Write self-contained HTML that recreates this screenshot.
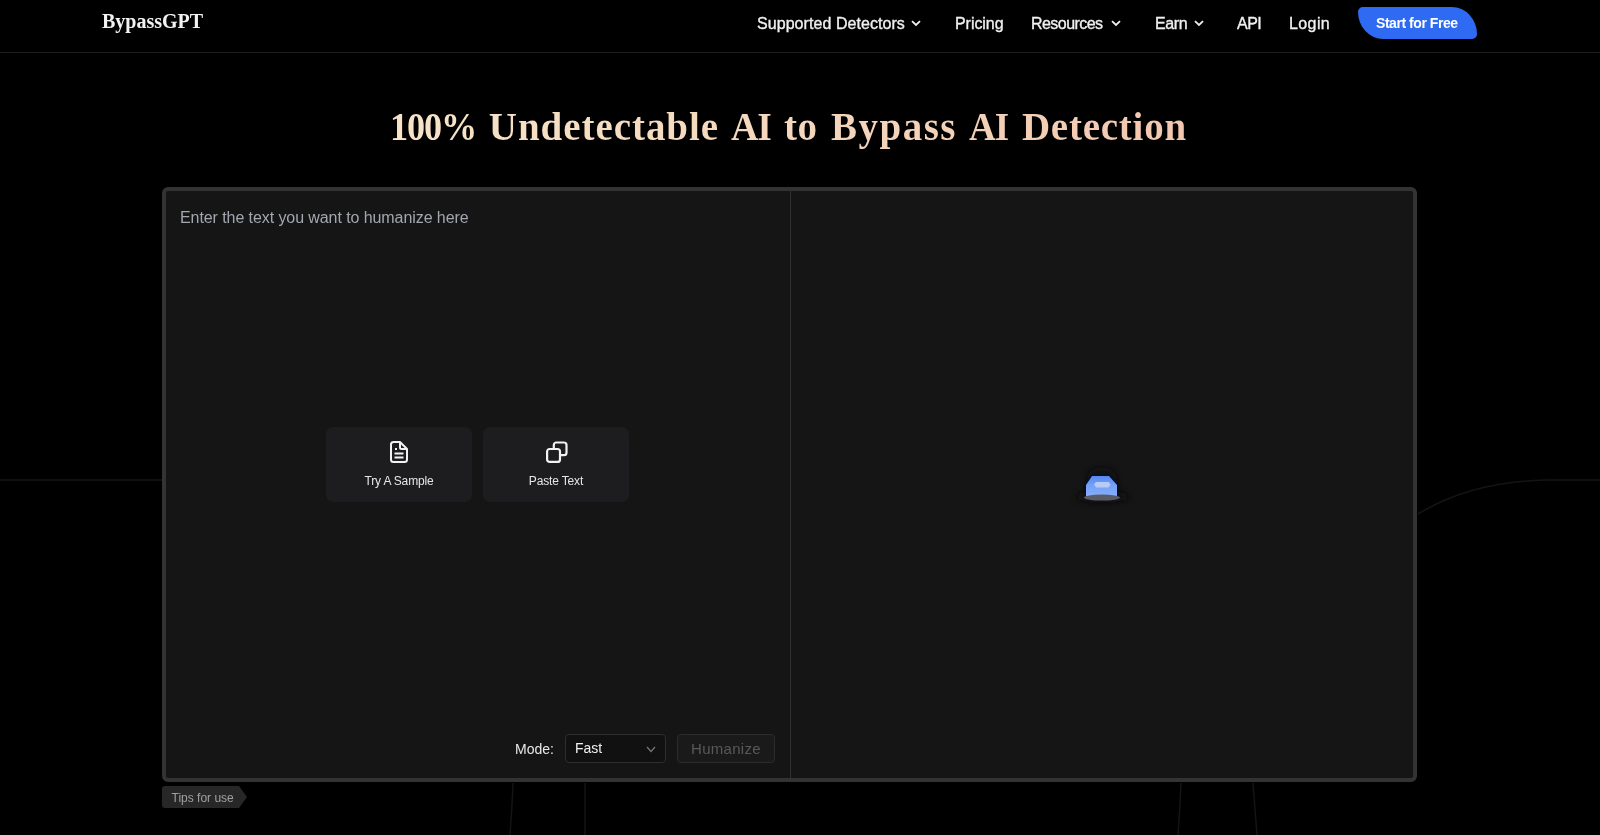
<!DOCTYPE html>
<html><head><meta charset="utf-8">
<style>
*{margin:0;padding:0;box-sizing:border-box}
html,body{width:1600px;height:835px;overflow:hidden;background:#000}
body{position:relative;font-family:"Liberation Sans",sans-serif;color:#fff;-webkit-font-smoothing:antialiased}
#hdr,#box,.tips{will-change:transform}
.abs{position:absolute;white-space:nowrap}
#hdr{position:absolute;left:0;top:0;width:1600px;height:53px;border-bottom:1px solid #1c1c1c;background:#000}
.logo{left:102px;top:9px;font-family:"Liberation Serif",serif;font-weight:700;font-size:20px;line-height:24px;color:#f2f2f2}
.nav{top:14.8px;font-size:16px;line-height:18px;color:#f0f0f0;-webkit-text-stroke:0.35px #f0f0f0}
.chev{position:absolute;top:0}
.cta{position:absolute;left:1358px;top:7px;width:119px;height:32px;background:#2f6bf2;border-radius:5px 26px 5px 26px / 5px 28px 5px 28px;}
.cta span{position:absolute;left:18px;top:8px;font-size:14px;line-height:16px;font-weight:700;color:#fff;letter-spacing:-0.45px}
.title{position:absolute;left:0;top:106px;width:1600px;height:46px;font-family:"Liberation Serif",serif;font-weight:700;font-size:39px;line-height:42px}
.title span{position:absolute;top:0;white-space:nowrap;height:46px;background-image:linear-gradient(90deg,#f7e4c8 0px,#f7e4c8 400px,#f4d4ba 880px,#f3c8b0 1180px,#f3c8b0 1600px);background-size:1600px 46px;-webkit-background-clip:text;background-clip:text;color:transparent}
#box{position:absolute;left:162px;top:187px;width:1255px;height:595px;border:4px solid #333;border-radius:6px;background:#151515}
#div{position:absolute;left:624px;top:0;width:1px;height:587px;background:#303030}
.ph{left:14px;top:18px;font-size:16px;line-height:18px;color:#a2a7af;letter-spacing:-0.08px}
.card{position:absolute;top:236px;width:146px;height:75px;background:#1d1d1f;border-radius:7px}
.card span{position:absolute;left:0;width:100%;text-align:center;top:47px;letter-spacing:-0.15px;font-size:12px;line-height:14px;color:#e6e6e6}
.card svg{position:absolute;top:14px}
.tips{position:absolute;left:162px;top:786px;width:86px;height:22px}
.tips span{position:absolute;left:9.5px;top:5px;font-size:12px;line-height:14px;color:#a0a0a0;white-space:nowrap}
.mode{left:349px;top:550px;font-size:14px;line-height:16px;color:#e8e8e8}
.sel{position:absolute;left:399px;top:543px;width:101px;height:29px;border:1px solid #2e2e2e;border-radius:4px;background:#111}
.sel span{position:absolute;left:9px;top:5px;font-size:14px;line-height:16px;color:#f0f0f0}
.hum{position:absolute;left:511px;top:543px;width:98px;height:29px;border:1px solid #2c2c2c;border-radius:4px;background:#1a1a1a}
.hum span{position:absolute;left:13px;top:5px;font-size:15px;line-height:17px;color:#595959;letter-spacing:0.3px}
</style></head><body>
<svg class="abs" style="left:0;top:0" width="1600" height="835">
  <g fill="none" stroke="#141414" stroke-width="1.5">
    <line x1="0" y1="480" x2="165" y2="480"/>
    <path d="M1418 514 Q1470 482 1545 480 L1600 480"/>
    <path d="M513 783 Q512 810 510 835"/>
    <path d="M585 783 L585 835"/>
    <path d="M1181 783 Q1180 810 1178 835"/>
    <path d="M1253 783 Q1255 810 1257 835"/>
  </g>
</svg>
<div id="hdr">
  <div class="abs logo">BypassGPT</div>
  <div class="abs nav" style="left:757px;letter-spacing:0.06px">Supported Detectors</div>
  <svg class="abs" style="left:911px;top:20px" width="11" height="8" viewBox="0 0 11 8"><path d="M1 1.2 L5 5 L9 1.2" fill="none" stroke="#f0f0f0" stroke-width="1.8"/></svg>
  <div class="abs nav" style="left:955px;letter-spacing:-0.05px">Pricing</div>
  <div class="abs nav" style="left:1031px;letter-spacing:-0.55px">Resources</div>
  <svg class="abs" style="left:1111px;top:20px" width="11" height="8" viewBox="0 0 11 8"><path d="M1 1.2 L5 5 L9 1.2" fill="none" stroke="#f0f0f0" stroke-width="1.8"/></svg>
  <div class="abs nav" style="left:1155px;letter-spacing:-0.4px">Earn</div>
  <svg class="abs" style="left:1194px;top:20px" width="11" height="8" viewBox="0 0 11 8"><path d="M1 1.2 L5 5 L9 1.2" fill="none" stroke="#f0f0f0" stroke-width="1.8"/></svg>
  <div class="abs nav" style="left:1237px;letter-spacing:-0.5px">API</div>
  <div class="abs nav" style="left:1289px;letter-spacing:0.4px">Login</div>
  <div class="cta"><span>Start for Free</span></div>
</div>
<div class="title"><span style="left:390px;background-position:-390px 0;letter-spacing:-1.2px;transform:scaleX(0.93);transform-origin:0 0">100%</span><span style="left:488.8px;background-position:-488.8px 0;letter-spacing:0.955px">Undetectable</span><span style="left:731px;background-position:-731px 0;letter-spacing:-1px;transform:scaleX(0.97);transform-origin:0 0">AI</span><span style="left:783.9px;background-position:-783.9px 0;letter-spacing:0.5px">to</span><span style="left:831.1px;background-position:-831.1px 0;letter-spacing:1.46px">Bypass</span><span style="left:969px;background-position:-969px 0;letter-spacing:-1px;transform:scaleX(0.95);transform-origin:0 0">AI</span><span style="left:1021.9px;background-position:-1021.9px 0;letter-spacing:0.763px">Detection</span></div>
<div id="box">
  <div id="div"></div>
  <div class="abs ph">Enter the text you want to humanize here</div>
  <div class="card" style="left:160px">
    <svg style="left:64px;top:14px" width="18" height="22" viewBox="0 0 18 22"><g fill="none" stroke="#f2f2f2" stroke-width="2" stroke-linejoin="round"><path d="M1 3.5Q1 1 3.5 1L10 1L17 8L17 18.5Q17 21 14.5 21L3.5 21Q1 21 1 18.5Z"/><path d="M10 1L10 6.5Q10 8 11.5 8L17 8"/><path d="M4.5 12.4H13.5M4.5 16.6H13.5"/></g><rect x="5" y="7" width="2" height="2" fill="#f2f2f2"/></svg>
    <span>Try A Sample</span>
  </div>
  <div class="card" style="left:317px">
    <svg style="left:62px;top:14px" width="24" height="23" viewBox="0 0 24 23"><g stroke="#f2f2f2" stroke-width="2.2"><rect x="8.8" y="1.5" width="12.7" height="12.7" rx="2.5" fill="none"/><rect x="2.1" y="8" width="12.9" height="12.9" rx="2.5" fill="#1d1d1f"/></g></svg>
    <span>Paste Text</span>
  </div>
  <div class="abs mode">Mode:</div>
  <div class="sel"><span>Fast</span><svg width="10" height="7" viewBox="0 0 10 7" style="position:absolute;left:80px;top:11px"><path d="M1 1L5 5.5L9 1" fill="none" stroke="#777" stroke-width="1.2"/></svg></div>
  <div class="hum"><span>Humanize</span></div>
  <svg style="position:absolute;left:900px;top:265px" width="80" height="60" viewBox="0 0 80 60">
    <defs><radialGradient id="sh" cx="50%" cy="50%" r="50%"><stop offset="0%" stop-color="#2a2a2a"/><stop offset="100%" stop-color="#161616" stop-opacity="0"/></radialGradient></defs>
    <defs><filter id="bf" x="-50%" y="-50%" width="200%" height="200%"><feGaussianBlur stdDeviation="3"/></filter></defs><path d="M10 43 Q12 36 20 36 L22 20 Q24 12 36 12 Q48 12 50 20 L52 36 Q61 36 63 43 Q36 50 10 43Z" fill="#0c0c0c" filter="url(#bf)" opacity="0.8"/>
    
    <path d="M26 29.5L27.5 25.6 C 30.5 20.5 30.5 19.5 33 19.9 L42.5 19.9 C 44.5 19.5 45 20.5 47.5 25.6 L51.4 29.5 L51.4 41 L20 41 L20 29.5 Z" fill="none"/>
    <path d="M20 40 L20 29 L26 20 L43 20 L51 29 L51 40" fill="none" stroke="#000c2e" stroke-width="2.4" stroke-linejoin="round"/>
    <path d="M20 29 L26 20 L43 20 L51 29 L51 40.5 L20 40.5 Z" fill="url(#bl)"/>
    <defs><linearGradient id="bl" x1="0" y1="0" x2="0" y2="1"><stop offset="0%" stop-color="#5687f0"/><stop offset="45%" stop-color="#74a0f8"/><stop offset="100%" stop-color="#88aefb"/></linearGradient></defs>
    <ellipse cx="36" cy="41.6" rx="18" ry="3" fill="#575c68"/><path d="M28 28.5 L30 26 L42.5 26 L44.5 28.5 L42.5 31.5 L30 31.5 Z" fill="#b6cbf8"/>
  </svg>
</div>
<div class="tips"><svg width="86" height="22" viewBox="0 0 86 22" style="position:absolute;left:0;top:0"><path d="M3 0 L77 0 L85 11 L77 22 L3 22 Q0 22 0 19 L0 3 Q0 0 3 0Z" fill="#272727"/></svg><span>Tips for use</span></div>
</body></html>
